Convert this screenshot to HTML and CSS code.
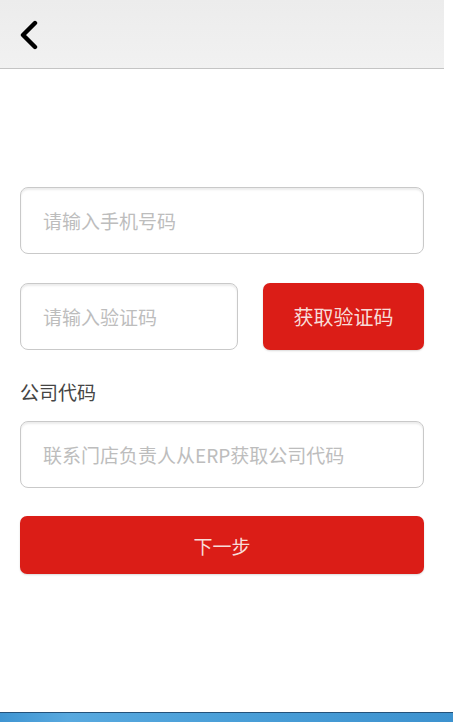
FILE: index.html
```html
<!DOCTYPE html>
<html lang="zh-CN">
<head>
<meta charset="utf-8">
<title>登录</title>
<link rel="stylesheet" href="styles.css">
</head>
<body>
<div class="page">
  <header class="topbar">
    <button class="back" type="button" aria-label="返回">
      <svg width="24" height="32" viewBox="0 0 24 32"><path d="M16 3 L4 15 L16 27" fill="none" stroke="#000" stroke-width="4.4" stroke-linecap="round" stroke-linejoin="round"/></svg>
    </button>
  </header>
  <main class="form">
    <div class="field field-phone"><span class="ph">请输入手机号码</span></div>
    <div class="code-row">
      <div class="field field-code"><span class="ph">请输入验证码</span></div>
      <button class="btn btn-code" type="button">获取验证码</button>
    </div>
    <div class="label">公司代码</div>
    <div class="field field-company"><span class="ph">联系门店负责人从ERP获取公司代码</span></div>
    <button class="btn btn-next" type="button">下一步</button>
  </main>
  <div class="spacer"></div>
  <footer class="taskbar"></footer>
</div>
</body>
</html>
```

FILE: styles.css
```css
* { box-sizing: border-box; }
html, body { margin: 0; padding: 0; background: #fff; }
body { font-family: "Noto Sans CJK SC", "Noto Sans", sans-serif; }
.page { width: 453px; height: 722px; display: flex; flex-direction: column; }
.topbar {
  width: 444px;
  height: 69px;
  flex: none;
  background: linear-gradient(#ececec, #f1f1f1);
  border-bottom: 1px solid #c4c4c4;
  display: flex;
  align-items: flex-start;
  padding: 20px 0 0 19px;
}
.back { border: 0; background: none; padding: 0; margin: 0; width: 24px; height: 32px; display: block; }
.back svg { display: block; }
.form { padding: 118px 29px 0 20px; display: flex; flex-direction: column; }
.field {
  height: 67px;
  border: 1px solid #c9c9c9;
  border-radius: 8px;
  background: #fff;
  box-shadow: inset 0 2px 2px rgba(0,0,0,0.08);
  display: flex;
  align-items: center;
  padding-left: 22px;
}
.ph { color: #bdbdbd; font-size: 19px; line-height: 1; }
.code-row { display: flex; margin-top: 29px; gap: 25px; }
.field-code { width: 218px; }
.btn {
  border: 0;
  background: #db1d17;
  color: #f8dcd8;
  font-family: "Noto Sans CJK SC", "Noto Sans", sans-serif;
  border-radius: 7px;
  padding: 0;
  margin: 0;
  box-shadow: 0 1px 2px rgba(0,0,0,0.15);
}
.btn-code { width: 161px; height: 67px; font-size: 20px; }
.label { margin-top: 29px; font-size: 19px; color: #454545; line-height: 26px; height: 26px; }
.field-company { margin-top: 16px; }
.btn-next { margin-top: 28px; height: 58px; width: 404px; font-size: 19px; }
.spacer { flex: 1; }
.taskbar {
  height: 10px;
  flex: none;
  border-top: 1px solid #24527a;
  background: linear-gradient(90deg, #3f95d2, #58a9df 15%, #4a9fd8 50%, #3d92cf 100%);
}
```
